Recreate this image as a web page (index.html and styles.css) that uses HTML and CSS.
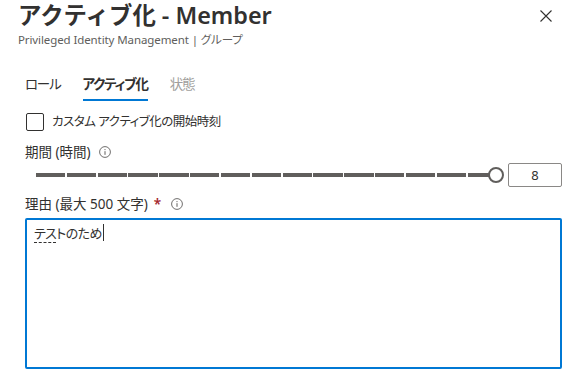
FILE: index.html
```html
<!DOCTYPE html>
<html lang="ja">
<head>
<meta charset="utf-8">
<link rel="stylesheet" href="styles.css">
</head>
<body>
<div class="panel">
  <header class="header">
    <div class="titles">
      <h1 class="title">アクティブ化 - Member</h1>
      <div class="subtitle">Privileged Identity Management | グループ</div>
    </div>
    <button class="close" aria-label="閉じる">
      <svg width="12" height="12" viewBox="0 0 12 12"><path d="M0.5 0.5L11.5 11.5M11.5 0.5L0.5 11.5" stroke="#323130" stroke-width="1.1" fill="none"/></svg>
    </button>
  </header>
  <main class="content">
    <nav class="tabs">
      <span class="tab">ロール</span>
      <span class="tab active">アクティブ化</span>
      <span class="tab disabled">状態</span>
    </nav>
    <label class="check">
      <span class="box"></span>
      <span class="check-label">カスタム アクティブ化の開始時刻</span>
    </label>
    <div class="field-label">期間 (時間)
      <svg class="info" width="12" height="12" viewBox="0 0 12 12"><circle cx="6" cy="6" r="5.4" stroke="#605e5c" stroke-width="0.9" fill="none"/><path d="M6 5.2V8.8" stroke="#605e5c" stroke-width="1"/><circle cx="6" cy="3.6" r="0.6" fill="#605e5c"/></svg>
    </div>
    <div class="slider-row">
      <div class="slider">
        <div class="track">
          <span></span><span></span><span></span><span></span><span></span>
          <span></span><span></span><span></span><span></span><span></span>
          <span></span><span></span><span></span><span></span><span></span>
        </div>
        <span class="thumb"></span>
      </div>
      <div class="num">8</div>
    </div>
    <div class="field-label reason">理由 (最大 500 文字)<span class="req">*</span>
      <svg class="info" width="12" height="12" viewBox="0 0 12 12"><circle cx="6" cy="6" r="5.4" stroke="#605e5c" stroke-width="0.9" fill="none"/><path d="M6 5.2V8.8" stroke="#605e5c" stroke-width="1"/><circle cx="6" cy="3.6" r="0.6" fill="#605e5c"/></svg>
    </div>
    <div class="textarea"><span class="ime">テス</span>トのため<span class="caret"></span></div>
  </main>
</div>
</body>
</html>
```
FILE: styles.css
```css
html, body {
  margin: 0;
  padding: 0;
  background: #ffffff;
}
body {
  font-family: "Noto Sans", "Noto Sans CJK JP", sans-serif;
  font-feature-settings: "palt";
  color: #323130;
}
.panel {
  width: 572px;
  height: 386px;
  overflow: hidden;
}
.header {
  display: flex;
  justify-content: space-between;
  align-items: flex-start;
  padding: 0 20px 0 18px;
}
.title {
  margin: 0;
  font-size: 23.4px;
  font-weight: 600;
  line-height: 30px;
  font-feature-settings: normal;
}
.subtitle {
  font-size: 11.5px;
  line-height: 18px;
  color: #605e5c;
  margin-top: 1px;
  letter-spacing: -0.1px;
}
.close {
  border: 0;
  background: none;
  padding: 0;
  margin-top: 10px;
  width: 12px;
  height: 12px;
  display: flex;
}
.content {
  padding: 0 10px 0 25px;
}
.tabs {
  display: flex;
  gap: 22px;
  margin-top: 24px;
  height: 32px;
}
.tab {
  font-size: 13.5px;
  line-height: 22px;
  height: 22px;
  padding-bottom: 4px;
  letter-spacing: -1.2px;
}
.tab.active {
  font-weight: 600;
  border-bottom: 2px solid #0078d4;
  padding-bottom: 4px;
}
.tab.disabled {
  color: #a19f9d;
}
.check {
  display: flex;
  align-items: center;
  gap: 8px;
  margin-top: 8px;
  margin-left: 1px;
  height: 18px;
}
.box {
  width: 16px;
  height: 16px;
  border: 1px solid #323130;
  border-radius: 2px;
  box-sizing: content-box;
}
.check-label {
  font-size: 12.5px;
  line-height: 18px;
  letter-spacing: -0.5px;
}
.field-label {
  display: flex;
  align-items: center;
  font-size: 13.5px;
  line-height: 18px;
  margin-top: 12px;
}
.info {
  margin-left: 8px;
}
.req {
  color: #a4262c;
  margin-left: 6px;
  font-weight: 600;
}
.reason .info {
  margin-left: 10px;
}
.slider-row {
  display: flex;
  align-items: center;
  margin-top: 2px;
  height: 24px;
}
.slider {
  position: relative;
  flex: 1;
  height: 16px;
  display: flex;
  align-items: center;
  padding: 0 7px 0 11px;
}
.track {
  flex: 1;
  display: flex;
  gap: 1.5px;
  height: 4px;
}
.track span {
  flex: 1;
  background: #605e5c;
}
.thumb {
  position: absolute;
  right: 0;
  top: 0;
  width: 12px;
  height: 12px;
  border: 2px solid #605e5c;
  border-radius: 50%;
  background: #ffffff;
}
.num {
  width: 52px;
  height: 22px;
  border: 1px solid #8a8886;
  border-radius: 2px;
  margin-left: 4px;
  font-size: 13px;
  line-height: 22px;
  text-align: center;
}
.reason {
  margin-top: 8px;
}
.textarea {
  margin-top: 5px;
  width: 537px;
  height: 151px;
  border: 2px solid #0078d4;
  border-radius: 2px;
  padding: 3px 7px;
  box-sizing: border-box;
  font-size: 13px;
  line-height: 20px;
  letter-spacing: -0.6px;
}
.ime {
  border-bottom: 1px dashed #323130;
}
.caret {
  display: inline-block;
  width: 1px;
  height: 17px;
  background: #323130;
  vertical-align: -3px;
  margin-left: 1px;
}
```
